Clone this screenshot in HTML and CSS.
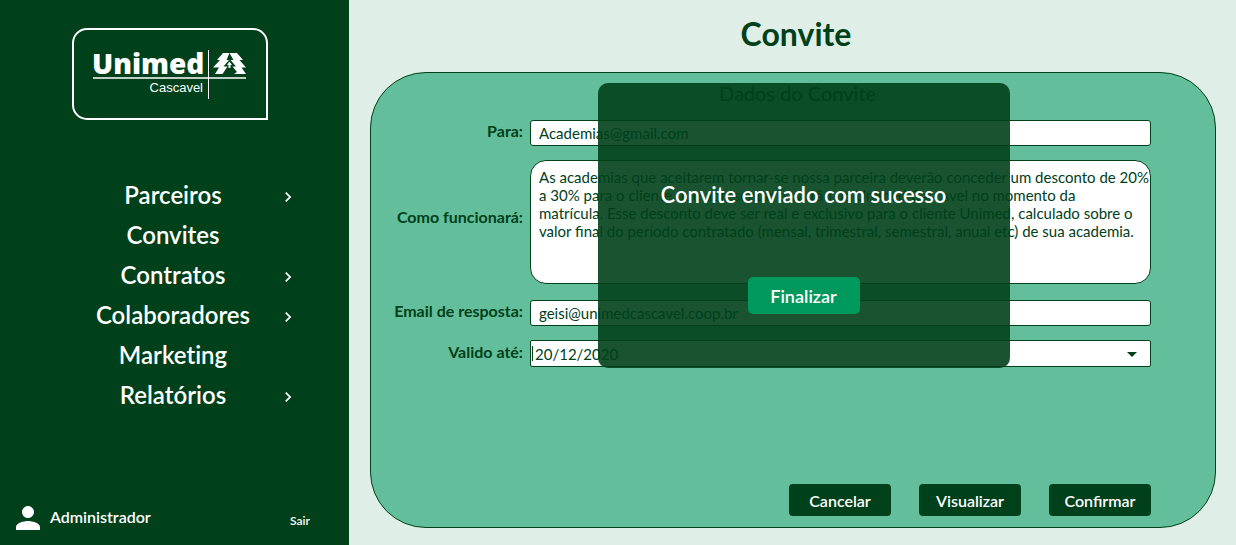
FILE: index.html
```html
<!DOCTYPE html>
<html lang="pt-BR">
<head>
<meta charset="utf-8">
<meta name="viewport" content="width=device-width, initial-scale=1">
<title>Convite</title>
<link rel="stylesheet" href="styles.css">
</head>
<body>
<div class="app">
  <aside class="sidebar">
    <svg class="logo" viewBox="0 0 196 92" role="img" aria-label="Unimed Cascavel">
      <path d="M15 1H181A14 14 0 0 1 195 15V91H15A14 14 0 0 1 1 77V15A14 14 0 0 1 15 1Z" fill="none" stroke="#fff" stroke-width="2"/>
      <text class="logo-brand" x="20" y="46">Unimed</text>
      <text class="logo-city" x="131" y="64" text-anchor="end">Cascavel</text>
      <path d="M21 50H174" stroke="#fff" stroke-width="1.5"/>
      <path d="M136.500 22V71" stroke="#fff" stroke-width="1"/>
      <path fill="#fff" d="M151 25H157.500L154.500 32H157L151.500 38.500H155.500L150.500 46H143L147 39.500H141L148 32H145Z"/>
      <path fill="#fff" d="M157.500 25H165L171 32H167.500L174 39.500H169.500L174 46H162L165 44L160.500 38.500H164L158.500 32H161.500Z"/>
      <path fill="#fff" d="M157.500 33.500L160 37H158.500V40H156.500V37H155Z"/>
    </svg>
    <nav class="menu" aria-label="Principal">
      <ul class="menu-list">
        <li class="menu-item"><a href="#parceiros">Parceiros</a><svg class="chevron" viewBox="0 0 24 24" aria-hidden="true"><path d="M10 6L8.590 7.410 13.170 12l-4.580 4.590L10 18l6-6z"/></svg></li>
        <li class="menu-item"><a href="#convites">Convites</a></li>
        <li class="menu-item"><a href="#contratos">Contratos</a><svg class="chevron" viewBox="0 0 24 24" aria-hidden="true"><path d="M10 6L8.590 7.410 13.170 12l-4.580 4.590L10 18l6-6z"/></svg></li>
        <li class="menu-item"><a href="#colaboradores">Colaboradores</a><svg class="chevron" viewBox="0 0 24 24" aria-hidden="true"><path d="M10 6L8.590 7.410 13.170 12l-4.580 4.590L10 18l6-6z"/></svg></li>
        <li class="menu-item"><a href="#marketing">Marketing</a></li>
        <li class="menu-item"><a href="#relatorios">Relatórios</a><svg class="chevron" viewBox="0 0 24 24" aria-hidden="true"><path d="M10 6L8.590 7.410 13.170 12l-4.580 4.590L10 18l6-6z"/></svg></li>
      </ul>
    </nav>
    <div class="account">
      <svg class="account-icon" viewBox="0 0 24 24" aria-hidden="true"><path d="M12 12c2.210 0 4-1.790 4-4s-1.790-4-4-4-4 1.790-4 4 1.790 4 4 4zm0 2c-2.670 0-8 1.340-8 4v2h16v-2c0-2.660-5.330-4-8-4z"/></svg>
      <span class="account-name">Administrador</span>
      <a class="account-exit" href="#sair">Sair</a>
    </div>
  </aside>

  <main class="content">
    <h1 class="title">Convite</h1>
    <form class="panel">
      <h2 class="panel-title">Dados do Convite</h2>
      <div class="fields">
        <label for="para">Para:</label>
        <input class="field" id="para" type="text" value="Academias@gmail.com">
        <label class="label-area" for="como">Como funcionará:</label>
        <textarea class="field field-area" id="como">As academias que aceitarem tornar-se nossa parceira deverão conceder um desconto de 20% a 30% para o cliente que apresentar o cartão da Unimed Cascavel no momento da
matrícula. Esse desconto deve ser real e exclusivo para o cliente Unimed, calculado sobre o valor final do período contratado (mensal, trimestral, semestral, anual etc) de sua academia.</textarea>
        <label for="email">Email de resposta:</label>
        <input class="field" id="email" type="text" value="geisi@unimedcascavel.coop.br">
        <label for="validade">Valido até:</label>
        <div class="select-wrap">
          <select class="field field-select" id="validade"><option>20/12/2020</option></select>
          <span class="caret"></span>
          <svg class="arrow" viewBox="0 0 10 5" aria-hidden="true"><path d="M0 0H10L5 5Z"/></svg>
        </div>
      </div>
      <div class="actions">
        <button class="button" type="button">Cancelar</button>
        <button class="button" type="button">Visualizar</button>
        <button class="button" type="button">Confirmar</button>
      </div>
    </form>
    <div class="modal" role="dialog" aria-labelledby="aviso">
      <p class="modal-text" id="aviso">Convite enviado com sucesso</p>
      <button class="modal-button" type="button">Finalizar</button>
    </div>
  </main>
</div>
</body>
</html>
```
FILE: styles.css
```css
:root {
  --dark: #00401a;
  --panel: #63bf9b;
  --page: #dfefe7;
  --accent: #00995d;
}

* { box-sizing: border-box; }

body {
  margin: 0;
  background: var(--page);
  color: var(--dark);
  font-family: Lato, sans-serif;
}

.app {
  display: flex;
  min-height: 100vh;
}

/* Sidebar */
.sidebar {
  display: flex;
  flex: 0 0 349px;
  flex-direction: column;
  background: var(--dark);
  color: #fff;
}

.sidebar a {
  color: inherit;
  text-decoration: none;
}

.logo {
  display: block;
  width: 196px;
  margin: 28px 0 0 72px;
}

.logo-brand {
  fill: #fff;
  font: 800 28px "Open Sans", sans-serif;
}

.logo-city {
  fill: #fff;
  font: 13px "Liberation Sans", sans-serif;
}

.menu { margin: 55px 49px 0 46px; }

.menu-list {
  margin: 0;
  padding: 0;
  list-style: none;
}

.menu-item {
  display: grid;
  grid-template-columns: 24px 1fr 24px;
  align-items: center;
  height: 40px;
  font-size: 24px;
  font-variant-ligatures: none;
  font-weight: 600;
  line-height: 28px;
  text-align: center;
}

.menu-item a { grid-column: 2; }

.chevron {
  width: 20px;
  margin: 4px 2px 0;
  fill: #fff;
}

.account {
  display: flex;
  align-items: center;
  margin: auto 39px 9px 10px;
  font-weight: 600;
}

.account-icon {
  width: 36px;
  fill: #fff;
}

.account-name {
  margin: 0 0 4px 4px;
  font-size: 16px;
}

.account-exit {
  margin: 4px 0 0 auto;
  font-size: 12px;
}

/* Main area */
.content {
  position: relative;
  display: flex;
  flex: 1;
  flex-direction: column;
  min-width: 0;
  padding: 14px 20px 17px 21px;
}

.title {
  margin: 0 0 18px 6px;
  font-size: 32px;
  font-weight: 700;
  line-height: 40px;
  text-align: center;
}

.panel {
  display: flex;
  flex: 1;
  flex-direction: column;
  padding: 8px 64px 11px 22px;
  border: 1px solid var(--dark);
  border-radius: 56px;
  background: var(--panel);
}

.panel-title {
  margin: 0 0 15px 51px;
  font-size: 20px;
  font-weight: 400;
  line-height: 24px;
  text-align: center;
}

.fields {
  display: grid;
  grid-template-columns: 130px 1fr;
  gap: 14px 7px;
  align-items: center;
}

.fields label {
  padding-bottom: 4px;
  font-size: 16px;
  font-weight: 700;
  line-height: 18px;
  text-align: right;
  white-space: nowrap;
}

.fields .label-area { padding-bottom: 12px; }

.field {
  display: block;
  width: 100%;
  height: 26px;
  margin: 0;
  padding: 0 8px;
  border: 1px solid var(--dark);
  border-radius: 3px;
  outline: 0;
  background: #fff;
  color: var(--dark);
  font: 400 15px/18px Lato, sans-serif;
}

.field-area {
  height: 124px;
  margin-bottom: 2px;
  padding: 7px 0 8px 8px;
  border-radius: 16px;
  overflow: hidden;
  resize: none;
}

.select-wrap { position: relative; }

.field-select {
  height: 27px;
  padding: 0 4px;
  border-radius: 2px;
  appearance: none;
}

.caret {
  position: absolute;
  top: 6px;
  left: 2px;
  width: 1px;
  height: 15px;
  background: var(--dark);
}

.arrow {
  position: absolute;
  top: 12px;
  right: 14px;
  width: 10px;
  fill: var(--dark);
}

.actions {
  display: flex;
  justify-content: flex-end;
  gap: 28px;
  margin-top: auto;
}

.button {
  width: 102px;
  height: 32px;
  padding: 1px 0 0;
  border: 0;
  border-radius: 4px;
  background: var(--dark);
  color: #fff;
  font: 600 16px Lato, sans-serif;
}

/* Confirmation message */
.modal {
  position: absolute;
  top: 83px;
  left: calc(50% + 11px);
  display: flex;
  flex-direction: column;
  align-items: center;
  width: 412px;
  padding: 98px 0 54px;
  border-radius: 10px;
  background: rgb(0 64 26 / 90%);
  transform: translateX(-50%);
}

.modal-text {
  margin: 0 0 68px;
  color: #fff;
  font-size: 22px;
  font-weight: 600;
  line-height: 28px;
}

.modal-button {
  width: 112px;
  height: 37px;
  padding: 1px 0 0;
  border: 0;
  border-radius: 5px;
  background: var(--accent);
  color: #fff;
  font: 600 18px Lato, sans-serif;
}
```
